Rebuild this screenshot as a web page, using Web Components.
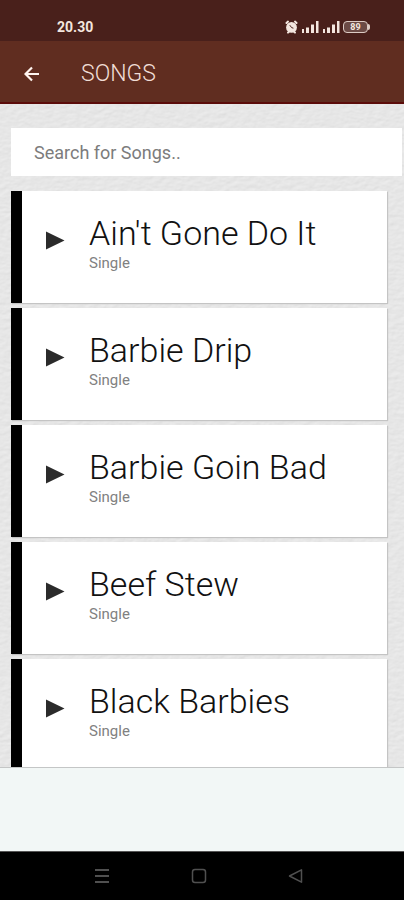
<!DOCTYPE html>
<html lang="en">
<head>
<meta charset="utf-8">
<meta name="viewport" content="width=device-width, initial-scale=1">
<title>Songs</title>
<style>
body { margin: 0; font-family: Roboto, "Liberation Sans", sans-serif; background: #e6e6e6; }
</style>
</head>
<body>
<songs-app>
  <status-bar slot="top"></status-bar>
  <title-bar slot="top">SONGS</title-bar>
  <song-search></song-search>
  <song-list>
    <song-card name="Ain't Gone Do It">Single</song-card>
    <song-card name="Barbie Drip">Single</song-card>
    <song-card name="Barbie Goin Bad">Single</song-card>
    <song-card name="Beef Stew">Single</song-card>
    <song-card name="Black Barbies">Single</song-card>
  </song-list>
  <ad-space slot="bottom"></ad-space>
  <nav-bar slot="bottom"></nav-bar>
</songs-app>
<script>
const define = (name, html, setup) => customElements.define(name, class extends HTMLElement {
  constructor() {
    super();
    const t = document.createElement('template');
    t.innerHTML = html;
    this.attachShadow({ mode: 'open' }).append(t.content.cloneNode(true));
  }
  connectedCallback() { if (setup) setup(this); }
});

define('songs-app', `
<style>
:host { display: flex; flex-direction: column; height: 100vh; }
main { flex: 1 1 0; min-height: 0; display: grid; overflow: hidden; }
.paper, .content { grid-area: 1 / 1; min-width: 0; min-height: 0; }
.paper { width: 100%; height: 100%; }
.content { display: flex; flex-direction: column; gap: 15px; padding-top: 24px; z-index: 1; }
</style>
<slot name="top"></slot>
<main>
  <svg class="paper" aria-hidden="true">
    <filter id="grain" x="0" y="0" width="100%" height="100%" color-interpolation-filters="sRGB">
      <feTurbulence type="fractalNoise" baseFrequency="0.14 0.24" numOctaves="3" seed="4" result="n"/>
      <feDiffuseLighting in="n" surfaceScale="0.18" diffuseConstant="1.07" lighting-color="#e8e8e8">
        <feDistantLight azimuth="60" elevation="68"/>
      </feDiffuseLighting>
    </filter>
    <rect width="100%" height="100%" filter="url(#grain)"/>
  </svg>
  <div class="content"><slot></slot></div>
</main>
<slot name="bottom"></slot>`);

define('status-bar', `
<style>
:host { display: flex; align-items: center; justify-content: space-between; height: 41px; box-sizing: border-box; padding: 12px 34px 0 57px; background: #49201b; color: #f3e6df; }
time { font-size: 14px; line-height: 16px; font-weight: 700; }
svg { display: block; }
.icons { display: flex; align-items: center; gap: 3px; }
.battery { display: flex; align-items: center; }
.level { box-sizing: border-box; width: 25px; height: 12px; border: 1px solid #dccbc4; border-radius: 4px; background: #6b4a45; font-size: 9px; line-height: 10px; font-weight: 700; text-align: center; }
.cap { width: 2px; height: 6px; background: #dccbc4; border-radius: 0 2px 2px 0; }
</style>
<time>20.30</time>
<div class="icons">
  <svg width="13" height="14" viewBox="0 0 13 14" role="img" aria-label="Alarm set">
    <path d="M1.500 3 3 1.600M11.500 3 10 1.600M3 12.600l1-1M10 12.600 9 11.600" stroke="#f3e6df" stroke-width="2" stroke-linecap="round"/>
    <circle cx="6.5" cy="7.4" r="5.4" fill="#f3e6df"/>
    <path d="M4.8 5.2 6.6 7.6 8.4 8.2" fill="none" stroke="#49201b" stroke-width="1"/>
  </svg>
  <svg width="18" height="13" viewBox="0 0 18 13" role="img" aria-label="Signal 1"><path d="M1 9h2v4H1zM5 7.500h3v5.500H5zM10 4.500h3v8.500h-3zM15 1h2.500v12H15z" fill="#f3e6df"/></svg>
  <svg width="18" height="13" viewBox="0 0 18 13" role="img" aria-label="Signal 2"><path d="M1 9h2v4H1zM5 7.500h3v5.500H5zM10 4.500h3v8.500h-3zM15 1h2.500v12H15z" fill="#f3e6df"/></svg>
  <div class="battery"><div class="level">89</div><div class="cap"></div></div>
</div>`);

define('title-bar', `
<style>
:host { display: block; }
header { display: flex; align-items: center; gap: 33px; height: 63px; box-sizing: border-box; padding: 4px 0 0 16px; background: #602d20; border-bottom: 2px solid #5b0c0a; color: #f0ddd6; }
button { display: grid; place-items: center; width: 32px; height: 32px; padding: 0; border: 0; background: none; }
h1 { margin: 0; font-size: 23px; line-height: 28px; font-weight: 350; }
</style>
<header>
  <button aria-label="Back"><svg width="16" height="16" viewBox="0 0 16 16"><path d="M15 8H2M8 1.500 1.500 8 8 14.500" fill="none" stroke="#fff5f0" stroke-width="2.200"/></svg></button>
  <h1><slot></slot></h1>
</header>`);

define('song-search', `
<style>
:host { display: block; margin: 0 2px 0 11px; }
input { display: block; box-sizing: border-box; width: 100%; height: 48px; padding: 0 23px; border: 0; border-radius: 0; background: #fff; font: 400 18px/24px Roboto, "Liberation Sans", sans-serif; color: #333; }
input::placeholder { color: #7c7c7c; opacity: 1; }
</style>
<input type="search" aria-label="Search for Songs" placeholder="Search for Songs..">`);

define('song-list', `
<style>
:host { display: flex; flex-direction: column; gap: 5px; flex: 1 1 0; min-height: 0; overflow-y: auto; scrollbar-width: none; padding: 0 17px 0 11px; }
</style>
<slot></slot>`);

define('song-card', `
<style>
:host { display: block; flex: none; }
article { display: flex; align-items: flex-start; box-sizing: border-box; height: 112px; padding: 21px 12px 0 24px; border-left: 11px solid #000; background: #fff; box-shadow: 1px 1px 1px #c4c4c4; }
button { flex: none; width: 19px; margin: 19px 24px 0 0; padding: 0; border: 0; background: none; }
svg { display: block; }
h2 { margin: 0; font-size: 34px; line-height: 42px; font-weight: 350; color: #111; }
p { margin: 0; font-size: 15px; line-height: 18px; font-weight: 400; color: #818181; }
</style>
<article>
  <button><svg width="19" height="19" viewBox="0 0 19 19"><path d="M0 0.500 18.500 9.500 0 18.500z" fill="#2b2b2b"/></svg></button>
  <div><h2></h2><p><slot></slot></p></div>
</article>`, el => {
  const name = el.getAttribute('name');
  el.shadowRoot.querySelector('h2').textContent = name;
  el.shadowRoot.querySelector('button').setAttribute('aria-label', 'Play ' + name);
});

define('ad-space', `
<style>:host { display: block; flex: none; height: 84px; box-sizing: border-box; border-top: 1px solid #c4c6c6; background: #f2f7f6; }</style>`);

define('nav-bar', `
<style>
:host { display: block; flex: none; }
nav { display: flex; justify-content: center; gap: 65px; height: 49px; background: #000; padding-right: 6px; box-sizing: border-box; border-top: 1px solid #555; }
button { width: 32px; padding: 0; border: 0; background: none; display: grid; place-items: center; }
path, rect { fill: none; stroke: #505050; stroke-width: 1.500; }
</style>
<nav aria-label="System">
  <button aria-label="Recent apps"><svg width="16" height="16" viewBox="0 0 16 16"><path d="M1 2h14M1 8h14M1 14h14" style="stroke-width:2"/></svg></button>
  <button aria-label="Home"><svg width="16" height="16" viewBox="0 0 16 16"><rect x="1.500" y="1.500" width="13" height="13" rx="2.500"/></svg></button>
  <button aria-label="Back"><svg width="16" height="16" viewBox="0 0 16 16"><path d="M13.500 1.800v12.400L1.500 8z" stroke-linejoin="round"/></svg></button>
</nav>`);
</script>
</body>
</html>
